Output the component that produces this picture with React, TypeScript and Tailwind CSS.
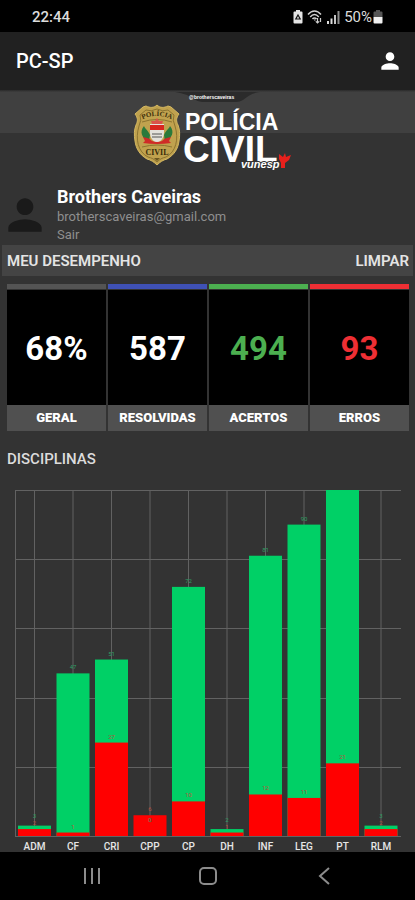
import React from 'react';
import { MdPerson } from 'react-icons/md';

const stats = [
  { label: 'GERAL', value: '68%', bar: 'bg-[#545454]', text: 'text-white' },
  { label: 'RESOLVIDAS', value: '587', bar: 'bg-[#3f51b5]', text: 'text-white' },
  { label: 'ACERTOS', value: '494', bar: 'bg-[#4caf50]', text: 'text-[#4caf50]' },
  { label: 'ERROS', value: '93', bar: 'bg-[#ee2f34]', text: 'text-[#ee2f34]' },
];

const subjects = [
  { name: 'ADM', right: 3, wrong: 2 },
  { name: 'CF', right: 47, wrong: 1 },
  { name: 'CRI', right: 51, wrong: 27 },
  { name: 'CPP', right: 0, wrong: 6 },
  { name: 'CP', right: 72, wrong: 10 },
  { name: 'DH', right: 2, wrong: 1 },
  { name: 'INF', right: 81, wrong: 12 },
  { name: 'LEG', right: 90, wrong: 11 },
  { name: 'PT', right: 100, wrong: 21 },
  { name: 'RLM', right: 3, wrong: 2 },
];

const StatusBar: React.FC = () => (
  <div className="flex h-8 items-center justify-between bg-black px-8 pt-0.5 text-[#dcdcdc]">
    <span className="text-[15px] font-medium">22:44</span>
    <div className="flex items-center gap-1">
      <svg width="10" height="14" viewBox="0 0 10 14">
        <path d="M3 0h4v1.5h1.5a1 1 0 0 1 1 1v10a1 1 0 0 1-1 1h-7a1 1 0 0 1-1-1v-10a1 1 0 0 1 1-1H3z" fill="#e4e4e4" />
        <path d="m5 5 2.200 4H2.800z" stroke="#111" strokeWidth="1.2" fill="none" />
      </svg>
      <svg width="16" height="14" viewBox="0 0 16 14" fill="none" stroke="#cfcfcf" strokeWidth="1.5">
        <path d="M1 4.5C5-.2 10-.2 14 4.5M3.2 7C6 3.8 9 3.8 11.8 7M5.5 9c1-1.3 3-1.3 4 0" />
        <path d="M7 10h1.5M10.5 8v5M8.8 11.3l1.700 1.700 1.700-1.700M13.500 12V8" strokeWidth="1.2" />
      </svg>
      <svg width="13" height="13" viewBox="0 0 13 13">
        <path d="M0 10h2v3H0zM3.5 7.5h2V13h-2z" fill="#dcdcdc" />
        <path d="M7 4h2v9H7z" fill="#c4c4c4" />
        <path d="M10.5 0h2v13h-2z" fill="#8d8d8d" />
      </svg>
      <div className="flex items-center gap-px">
        <span className="text-[15px]">50%</span>
        <svg width="10" height="14" viewBox="0 0 10 14">
          <path d="M3 0h4v1.5h1.5a1 1 0 0 1 1 1V7h-9V2.5a1 1 0 0 1 1-1H3z" fill="#555" />
          <path d="M.5 7h9v5.5a1 1 0 0 1-1 1h-7a1 1 0 0 1-1-1z" fill="#f0f0f0" />
        </svg>
      </div>
    </div>
  </div>
);

const Logo: React.FC = () => (
  <svg width="168" height="82" viewBox="124 92 168 82" fontFamily="Liberation Sans, sans-serif" fontWeight="bold">
    <path d="M175 92h85c-8 1-12 4-17 8q-3 2-7 2h-34q-4 0-8-3-6-5-19-7z" fill="#2b2b2b" />
    <text x="189" y="99" fontSize="5" fill="#fff">@brotherscaveiras</text>
    {/* badge */}
    <path
      d="M157 105c3 3 7 3 11 1l3 1 8 7c-3 4-3 7-1 11 2 5 2 10 1 16-1 8-5 14-12 18-4 1-7 3-10 6-3-3-6-5-10-6-7-4-11-10-12-18-1-6-1-11 1-16 2-4 2-7-1-11l8-7 3-1c4 2 8 2 11-1z"
      fill="#c0a24e"
      stroke="#d4b862"
    />
    <path
      d="M157 109q-6 3-11 1l-6 5q2 5-1 11c-4 13-1 26 9 31 4 1 6 2 9 5 3-3 5-4 9-5 10-5 13-18 9-31q-3-6-1-11l-6-5q-5 2-11-1z"
      fill="none"
      stroke="#8c7430"
    />
    <path id="badge-arc" d="M143 119q14-6 28 0" fill="none" />
    <text fontSize="7" fontFamily="Liberation Serif, serif" fill="#3a2d0a" textAnchor="middle">
      <textPath href="#badge-arc" startOffset="50%">POLÍCIA</textPath>
    </text>
    <path d="M142 122q15-5 30 0M142 147q15-4 30 0" stroke="#8c7430" fill="none" />
    <path d="M149 142c-7-4-10-10-5-16 1 3 4 4 6 9zM165 142c7-4 10-10 5-16-1 3-4 4-6 9z" fill="#2a7a3b" />
    <path d="m157 118 2 3h4l-1 3h-10l-1-3h4z" fill="#d9534a" />
    <path d="M150 124h14v9q0 7-7 10-7-3-7-10z" fill="#e4e1dc" />
    <path d="M150 125h14v5h-14z" fill="#d8261f" />
    <path d="M152 134h10M152 137h10" stroke="#555" />
    <path d="M143 137q7 1 9 4 5 2 10 0 2-3 9-4l-2 4 2 2q-7 1-14 1t-14-1l2-2z" fill="#cf2b27" />
    <text x="157" y="155" fontSize="8" fontFamily="Liberation Serif, serif" fill="#3a2d0a" textAnchor="middle">CIVIL</text>
    <path d="M154 158h6l-3 3z" fill="#6d5820" />
    <text x="185" y="130" fontSize="23" fill="#fff">POLÍCIA</text>
    <text x="183" y="162" fontSize="37" fill="#fff">CIVIL</text>
    <text x="241" y="168" fontSize="11" fontStyle="italic" fill="#fff" stroke="#333" strokeWidth="2" paintOrder="stroke">vunesp</text>
    <path d="m279 154 4 3 2-4 1 4 5-2-2 5-4 3v5h-4v-5l-2-4z" fill="#e8201c" />
  </svg>
);

const Banner: React.FC = () => (
  <div className="flex justify-center bg-linear-to-b from-[#2b2b2b] from-0% via-[#404040] via-5% to-[#404040] to-100% bg-[length:100%_43px] bg-no-repeat pt-0.5 pb-1">
    <Logo />
  </div>
);

const Profile: React.FC = () => (
  <div className="flex items-center pt-[7px]">
    <MdPerson size={50} className="text-[#1a1a1a]" />
    <div className="ml-[7px] flex flex-col items-start">
      <h2 className="text-lg font-bold leading-6 text-white">Brothers Caveiras</h2>
      <p className="text-[13px] leading-4 text-[#8f8f8f]">brotherscaveiras@gmail.com</p>
      <button type="button" className="text-[13px] leading-5 text-[#8f8f8f]">Sair</button>
    </div>
  </div>
);

// Plot area: x 15-401, y 10-356, 100 answers at full height
const BASE = 356;
const UNIT = 346 / 100;

const SubjectsChart: React.FC = () => (
  <svg viewBox="0 0 415 372" className="block w-full" role="img" aria-label="Disciplinas">
    <g stroke="#626262" strokeWidth="1">
      {[10.5, 79.5, 148.5, 218.5, 287.5, 356.5].map((y) => <line key={y} x1="15" x2="401" y1={y} y2={y} />)}
      <line x1="15.5" x2="15.5" y1="10" y2={BASE} />
      {subjects.map((s, i) => {
        const x = 34.5 + i * 38.5;
        return <line key={s.name} x1={x} x2={x} y1="10" y2={BASE} />;
      })}
    </g>
    {subjects.map((s, i) => {
      const x = 34.5 + i * 38.5;
      const top = BASE - s.right * UNIT;
      const redTop = BASE - s.wrong * UNIT;
      // keep the two counts apart on short bars
      const rightY = s.right ? Math.min(top - 4, redTop - 11) : redTop + 7;
      return (
        <g key={s.name} textAnchor="middle">
          <rect x={x - 16.5} y={top} width="33" height={s.right * UNIT} fill="#00d066" />
          <rect x={x - 16.5} y={redTop} width="33" height={s.wrong * UNIT} fill="#ff0000" />
          {s.right < 100 && <text x={x} y={rightY} fontSize="6" fill="#2f9e63">{s.right}</text>}
          <text x={x} y={redTop - 4} fontSize="6" fill="#b4503c">{s.wrong}</text>
          <text x={x} y="370" fontSize="10" fontWeight="500" fill="#e6e6e6">{s.name}</text>
        </g>
      );
    })}
  </svg>
);

const NavBar: React.FC = () => (
  <nav className="flex h-12 items-center justify-around bg-black px-8 text-[#8c8c8c]">
    <button type="button" aria-label="Recentes">
      <svg width="18" height="18" viewBox="0 0 18 18" fill="none" stroke="currentColor" strokeWidth="2">
        <path d="M3 1v16M10 1v16M17 1v16" />
      </svg>
    </button>
    <button type="button" aria-label="Início">
      <svg width="18" height="18" viewBox="0 0 18 18" fill="none" stroke="currentColor" strokeWidth="2">
        <rect x="1" y="1" width="16" height="16" rx="4" />
      </svg>
    </button>
    <button type="button" aria-label="Voltar">
      <svg width="18" height="18" viewBox="0 0 18 18" fill="none" stroke="currentColor" strokeWidth="2">
        <path d="M13 1 4 9l9 8" />
      </svg>
    </button>
  </nav>
);

const App: React.FC = () => {
  return (
    <div className="flex min-h-screen flex-col bg-[#333333] font-[Roboto,sans-serif]">
      <StatusBar />
      <header className="flex h-[58px] items-center justify-between bg-[#212121] pl-4 pr-3">
        <h1 className="text-xl font-medium text-white">PC-SP</h1>
        <button type="button" aria-label="Perfil">
          <MdPerson size={26} className="text-white" />
        </button>
      </header>
      <main className="flex-1">
        <Banner />
        <Profile />
        <div className="mx-0.5 flex h-[31px] items-center justify-between bg-[#444444] pl-[5px] pr-1 pt-0.5 text-[15px] text-[#e4e4e4]">
          <h3 className="font-semibold">MEU DESEMPENHO</h3>
          <button type="button" className="font-semibold">LIMPAR</button>
        </div>
        <div className="mt-2 grid grid-cols-4 gap-0.5 pl-[7px] pr-1.5">
          {stats.map((stat) => (
            <div key={stat.label} className="text-center">
              <div className={`h-[5px] ${stat.bar}`} />
              <div className={`mt-px flex h-[115px] items-center justify-center bg-black pt-0.5 text-[33px] font-bold ${stat.text}`}>
                {stat.value}
              </div>
              <div className="bg-[#505050] text-[13px] font-black leading-[26px] text-white">{stat.label}</div>
            </div>
          ))}
        </div>
        <h3 className="px-[7px] pb-2 pt-4 text-[15px] font-medium leading-[25px] text-[#dcdcdc]">DISCIPLINAS</h3>
        <SubjectsChart />
      </main>
      <NavBar />
    </div>
  );
};

export default App;
